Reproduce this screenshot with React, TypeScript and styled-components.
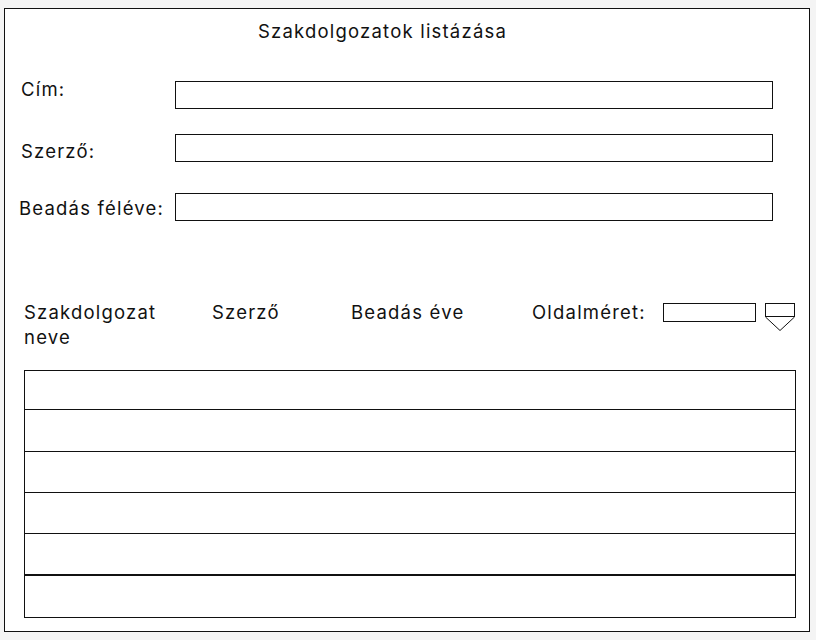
import React from 'react';
import styled, { createGlobalStyle } from 'styled-components';

const GlobalStyle = createGlobalStyle`
  html, body {
    margin: 0;
    padding: 0;
    background: #f4f4f4;
  }
  body {
    font-family: Inter, "Noto Sans", sans-serif;
    color: #111;
    font-size: 18.5px;
    letter-spacing: 1.2px;
  }
`;

const Frame = styled.div`
  box-sizing: border-box;
  margin: 8px 0 0 4px;
  width: 806px;
  height: 624px;
  background: #fff;
  border: 1px solid #111;
  padding: 10px 0 0 0;
  display: flex;
  flex-direction: column;
`;

const Title = styled.h1`
  margin: 0 0 0 253px;
  font-size: 18.5px;
  font-weight: 400;
  line-height: 24px;
  letter-spacing: 1.2px;
`;

const Form = styled.div`
  display: flex;
  flex-direction: column;
  padding-left: 14px;
`;

const FormRow = styled.div<{ $top: number; $labelShift: number; $labelLeft: number }>`
  display: grid;
  grid-template-columns: 156px 598px;
  align-items: center;
  margin-top: ${p => p.$top}px;

  label {
    line-height: 24px;
    white-space: nowrap;
    padding-left: ${p => p.$labelLeft}px;
    transform: translateY(${p => p.$labelShift}px);
  }
`;

const TextBox = styled.div`
  box-sizing: border-box;
  height: 28px;
  border: 1px solid #111;
  background: #fff;
`;

const Header = styled.div`
  display: grid;
  grid-template-columns: 188px 139px 181px 131px 102px 30px;
  align-items: start;
  margin: 79px 0 0 19px;
  line-height: 25px;
`;

const HeadCell = styled.div``;

const SizeBox = styled.div`
  box-sizing: border-box;
  margin-top: 3px;
  width: 93px;
  height: 19px;
  border: 1px solid #111;
`;

const Drop = styled.div`
  margin-top: 3px;
  display: flex;
  flex-direction: column;
`;

const DropBox = styled.div`
  box-sizing: border-box;
  width: 30px;
  height: 14px;
  border: 1px solid #111;
`;

const Table = styled.div`
  box-sizing: border-box;
  margin: 20px 0 0 19px;
  width: 772px;
  border: 1px solid #111;
  display: flex;
  flex-direction: column;
`;

const Row = styled.div<{ $h: number; $thick?: boolean }>`
  box-sizing: border-box;
  height: ${p => p.$h}px;
  border-bottom: ${p => (p.$thick ? '2px' : '1px')} solid #111;

  &:last-child {
    border-bottom: none;
  }
`;

const rows = [
  { h: 39 },
  { h: 42 },
  { h: 41 },
  { h: 41 },
  { h: 42, thick: true },
  { h: 41 },
];

export default function App() {
  return (
    <>
      <GlobalStyle />
      <Frame>
        <Title>Szakdolgozatok listázása</Title>
        <Form>
          <FormRow $top={38} $labelShift={-6} $labelLeft={2}>
            <label>Cím:</label>
            <TextBox />
          </FormRow>
          <FormRow $top={25} $labelShift={3} $labelLeft={2}>
            <label>Szerző:</label>
            <TextBox />
          </FormRow>
          <FormRow $top={31} $labelShift={1} $labelLeft={0}>
            <label>Beadás féléve:</label>
            <TextBox />
          </FormRow>
        </Form>
        <Header>
          <HeadCell>
            Szakdolgozat
            <br />
            neve
          </HeadCell>
          <HeadCell>Szerző</HeadCell>
          <HeadCell>Beadás éve</HeadCell>
          <HeadCell>Oldalméret:</HeadCell>
          <SizeBox />
          <Drop>
            <DropBox />
            <svg width="30" height="14" viewBox="0 0 30 14">
              <path d="M0.5 0 L15 13.5 L29.5 0" fill="none" stroke="#111" strokeWidth="1" />
            </svg>
          </Drop>
        </Header>
        <Table>
          {rows.map((r, i) => (
            <Row key={i} $h={r.h} $thick={r.thick} />
          ))}
        </Table>
      </Frame>
    </>
  );
}
